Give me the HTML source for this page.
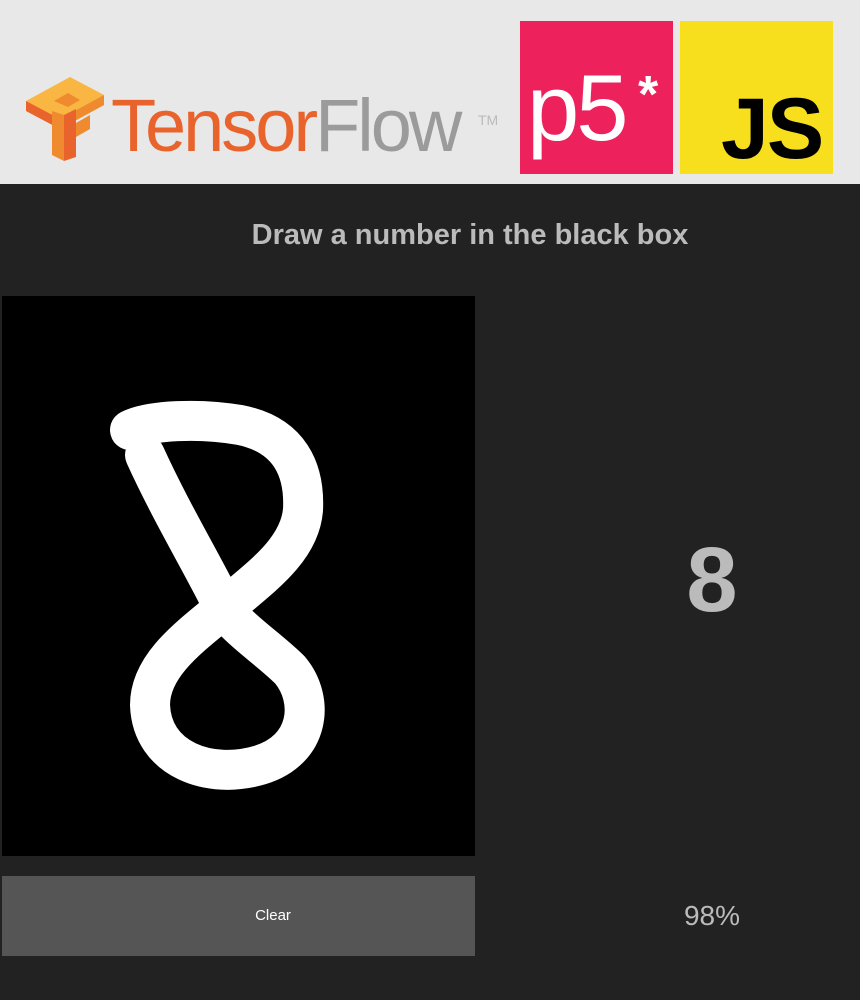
<!DOCTYPE html>
<html><head><style>
body{margin:0;width:860px;height:1000px;background:#222;font-family:"Liberation Sans",sans-serif;position:relative;overflow:hidden}
.hdr{position:absolute;left:0;top:0;width:860px;height:184px;background:#e8e8e8}
.abs{position:absolute}
</style></head><body>
<div class="hdr">
<svg class="abs" style="left:24px;top:75px" width="82" height="86" viewBox="0 0 82 86">
<polygon points="2,26 46,2 80,20 80,30 36,54 2,36" fill="#f9b643"/>
<polygon points="2,26 36,44 36,54 2,36" fill="#e8642c"/>
<polygon points="36,44 80,20 80,30 36,54" fill="#f08a2f"/>
<polygon points="30,26 44,18 56,25 44,32" fill="#f08a2f"/>
<polygon points="40,40 52,34 52,82 40,86" fill="#e8642c"/>
<polygon points="28,36 40,40 40,86 28,80" fill="#f08a2f"/>
<polygon points="52,48 66,40 66,54 52,62" fill="#f08a2f"/>
</svg>
<div class="abs" style="left:111px;top:86px;font-size:74px;letter-spacing:-3px;line-height:80px"><span style="color:#e8642c">Tensor</span><span style="color:#9b9b9b">Flow</span></div>
<div class="abs" style="left:478px;top:112px;font-size:14px;color:#bbb">TM</div>
<div class="abs" style="left:520px;top:21px;width:153px;height:153px;background:#ed225d"></div>
<div class="abs" style="left:527px;top:58px;font-size:94px;color:#fff;line-height:100px;letter-spacing:-3px">p5</div>
<div class="abs" style="left:638px;top:70px;font-size:52px;color:#fff;font-weight:bold;line-height:50px">*</div>
<div class="abs" style="left:680px;top:21px;width:153px;height:153px;background:#f7df1e"></div>
<div class="abs" style="left:721px;top:84px;font-size:86px;font-weight:bold;color:#000;line-height:90px;letter-spacing:-2px">JS</div>
</div>
<div class="abs" style="left:0;top:219px;width:940px;text-align:center;font-size:29px;font-weight:bold;color:#bbb">Draw a number in the black box</div>
<svg class="abs" style="left:2px;top:296px" width="473" height="560" viewBox="2 296 473 560">
<rect x="2" y="296" width="473" height="560" fill="#000"/>
<path d="M130,430 C150,420 200,418 240,425 C290,435 305,470 303,510 C300,545 270,570 240,595 C200,630 150,660 150,705 C152,760 210,780 260,765 C310,750 315,700 290,670 C265,645 230,625 220,600 C200,560 170,510 145,455" fill="none" stroke="#fff" stroke-width="40" stroke-linecap="round" stroke-linejoin="round"/>
</svg>
<div class="abs" style="left:612px;top:525px;width:200px;text-align:center;font-size:92px;font-weight:bold;color:#bbb;line-height:110px">8</div>
<div class="abs" style="left:2px;top:876px;width:473px;height:80px;background:#555"></div>
<div class="abs" style="left:173px;top:876px;width:200px;height:80px;color:#fff;font-size:15px;text-align:center;line-height:80px">Clear</div>
<div class="abs" style="left:612px;top:900px;width:200px;text-align:center;font-size:28px;color:#bbb">98%</div>
</body></html>
